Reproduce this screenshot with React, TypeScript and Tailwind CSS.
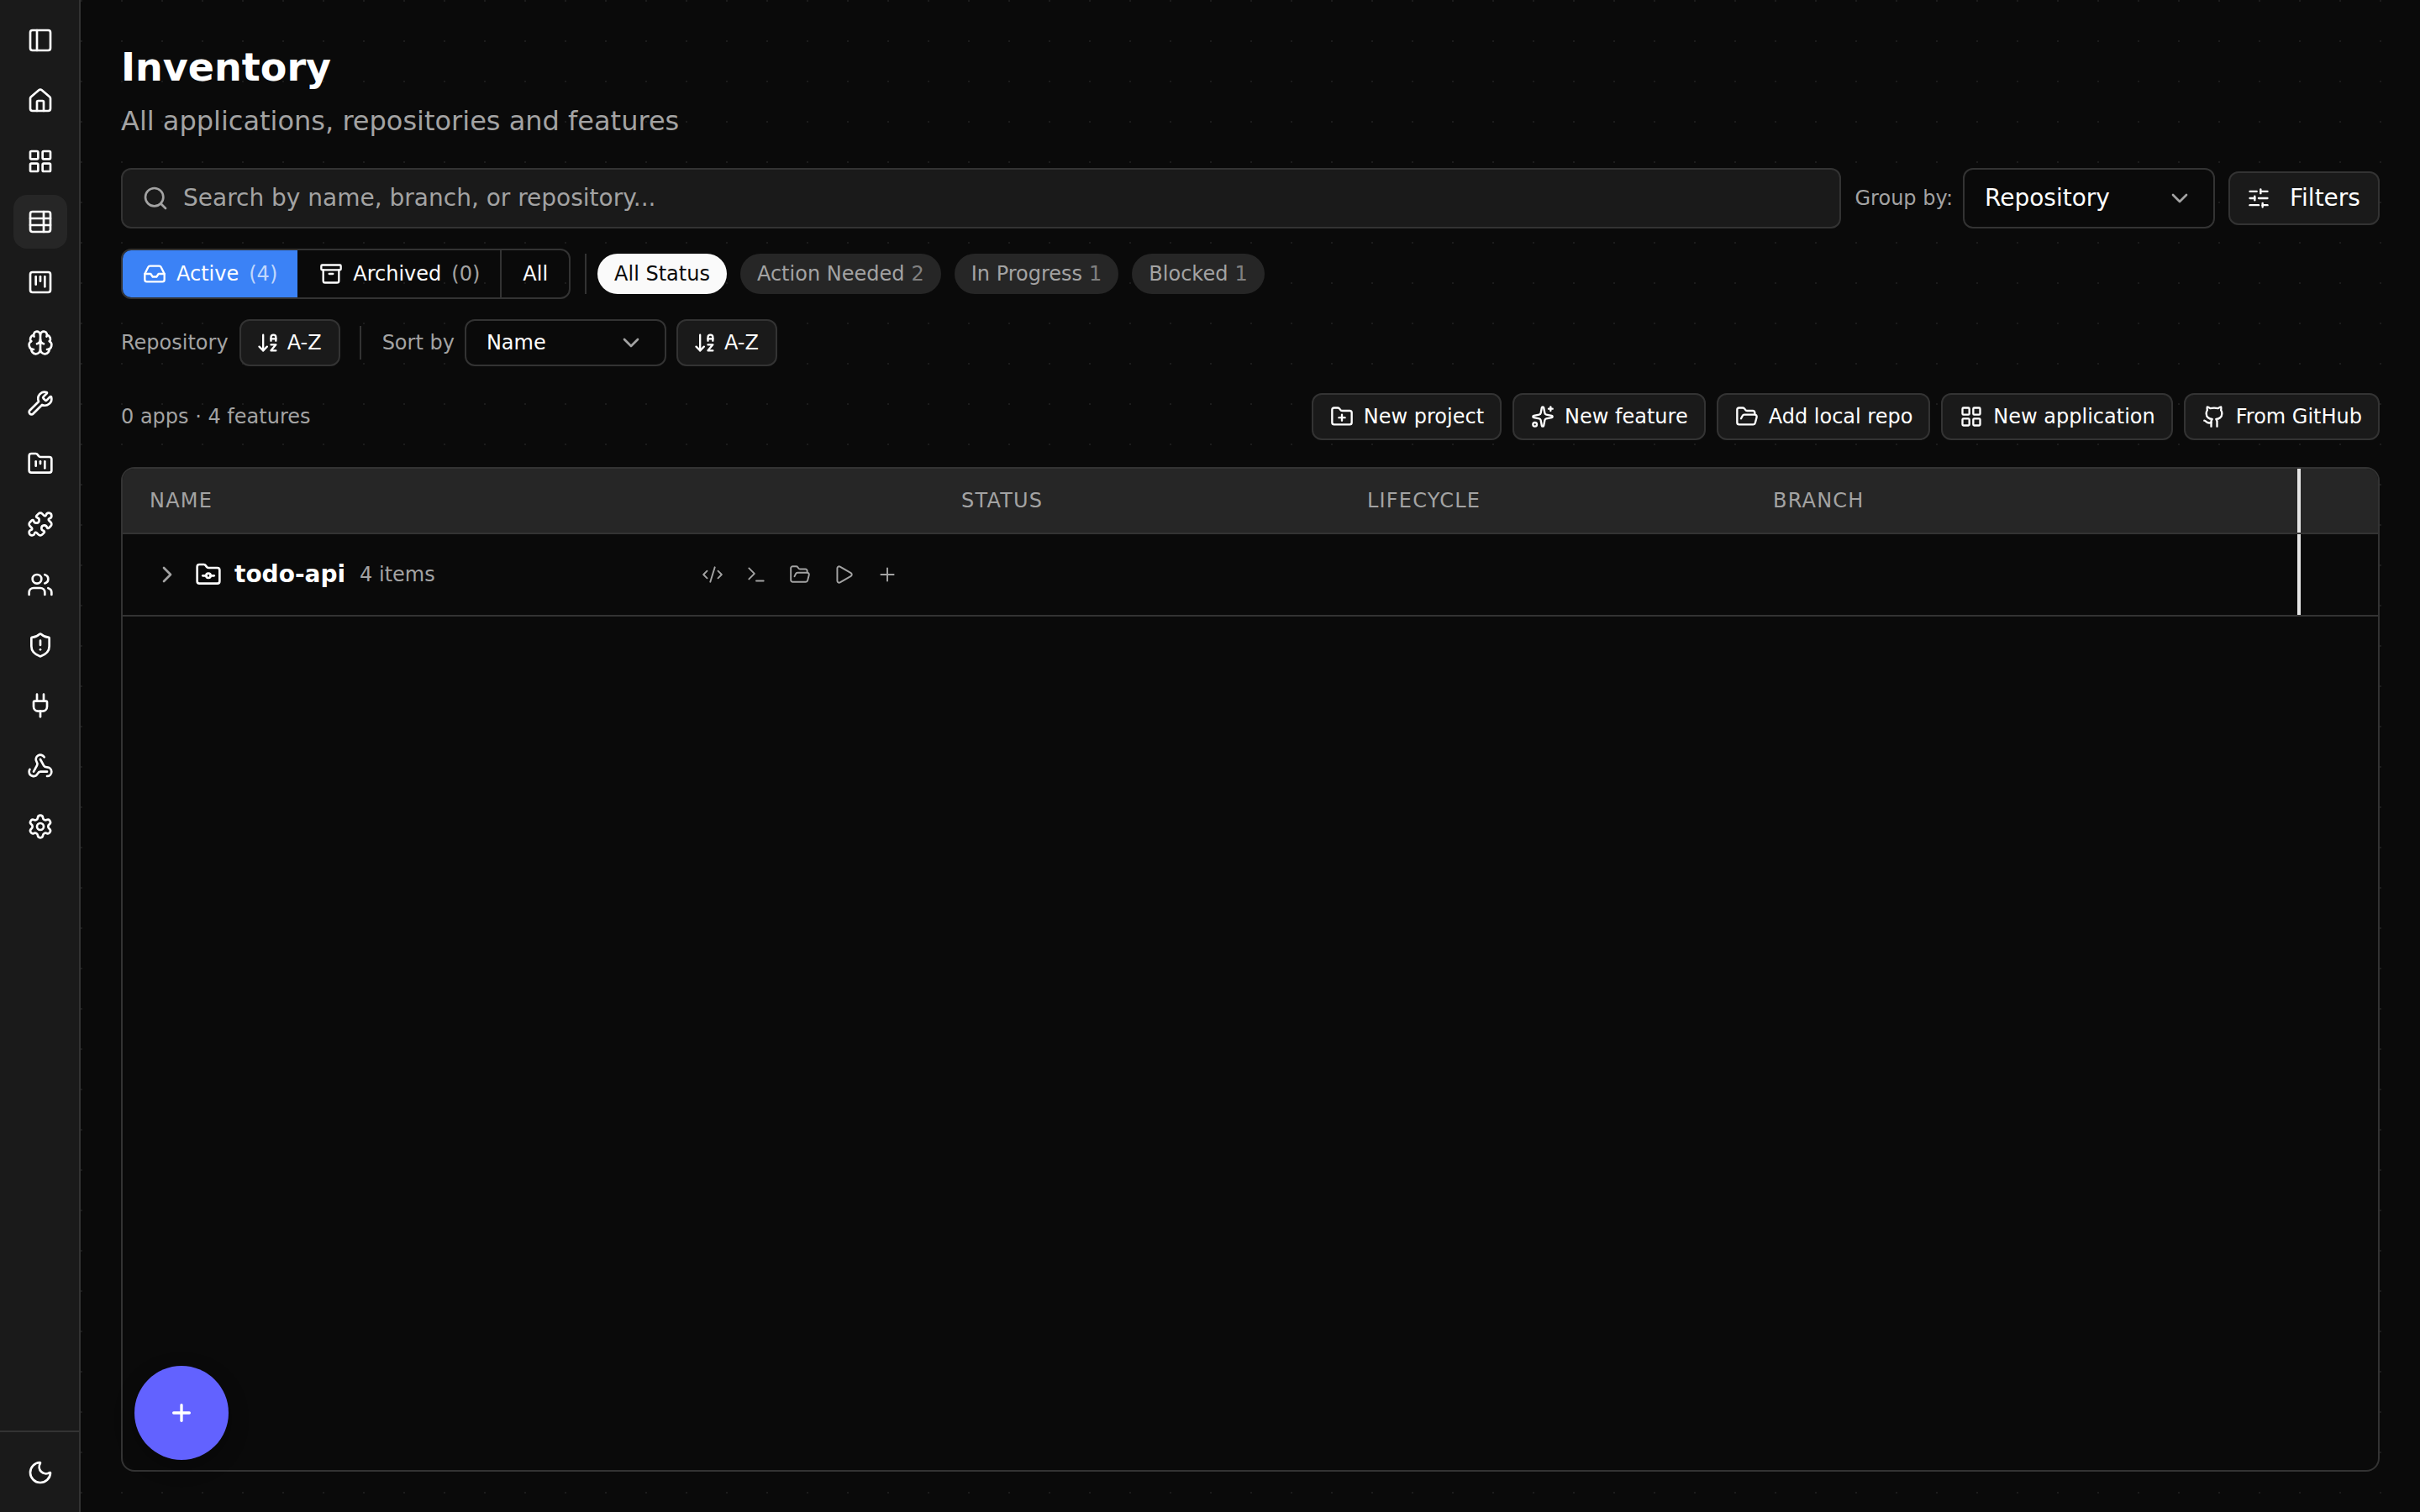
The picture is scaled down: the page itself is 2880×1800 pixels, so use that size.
import {
  Archive,
  ArrowDownAZ,
  Brain,
  ChevronDown,
  ChevronRight,
  CodeXml,
  FolderGit,
  FolderKanban,
  FolderOpen,
  FolderPlus,
  Github,
  House,
  Inbox,
  LayoutGrid,
  Moon,
  PanelLeft,
  Play,
  Plug,
  Plus,
  Puzzle,
  Search,
  Settings,
  ShieldAlert,
  SlidersHorizontal,
  Sparkles,
  SquareKanban,
  TableProperties,
  Terminal,
  Users,
  Webhook,
  Wrench,
} from "lucide-react";
import type { LucideIcon } from "lucide-react";

const navIcons: { icon: LucideIcon; active?: boolean }[] = [
  { icon: PanelLeft },
  { icon: House },
  { icon: LayoutGrid },
  { icon: TableProperties, active: true },
  { icon: SquareKanban },
  { icon: Brain },
  { icon: Wrench },
  { icon: FolderKanban },
  { icon: Puzzle },
  { icon: Users },
  { icon: ShieldAlert },
  { icon: Plug },
  { icon: Webhook },
  { icon: Settings },
];

const statusPills = [
  { label: "Action Needed", count: 2 },
  { label: "In Progress", count: 1 },
  { label: "Blocked", count: 1 },
];

const actionButtons: { icon: LucideIcon; label: string }[] = [
  { icon: FolderPlus, label: "New project" },
  { icon: Sparkles, label: "New feature" },
  { icon: FolderOpen, label: "Add local repo" },
  { icon: LayoutGrid, label: "New application" },
  { icon: Github, label: "From GitHub" },
];

const rowActions: LucideIcon[] = [CodeXml, Terminal, FolderOpen, Play, Plus];

const SortButton = () => (
  <button
    type="button"
    className="h-[56px] flex items-center gap-[9px] pl-[18px] pr-[20px] rounded-[12px] border-2 border-[#333333] bg-[#1a1a1a] text-[24px] text-white"
  >
    <ArrowDownAZ size={28} strokeWidth={2} />
    <span>A-Z</span>
  </button>
);

export default function App() {
  return (
    <div className="w-[2880px] h-[1800px] flex overflow-hidden bg-[#0a0a0a] text-white font-['DejaVu_Sans',sans-serif]">
      <aside className="w-[96px] shrink-0 flex flex-col justify-between bg-[#1a1a1a] border-r-2 border-[#333333]">
        <nav className="flex flex-col items-center gap-[8px] pt-[16px] pl-[2px]">
          {navIcons.map(({ icon: Icon, active }, i) => (
            <div
              key={i}
              className={`size-[64px] flex items-center justify-center rounded-[16px] ${active ? "bg-[#262626]" : ""}`}
            >
              <Icon size={32} strokeWidth={2} />
            </div>
          ))}
        </nav>
        <div className="h-[97px] flex items-center justify-center pl-[2px] border-t-2 border-[#333333]">
          <Moon size={32} strokeWidth={2} />
        </div>
      </aside>

      <main className="relative flex-1 min-w-0 flex flex-col px-[48px] pt-[50px] pb-[48px] bg-[radial-gradient(circle_at_1px_1px,#1c1c1c_1.5px,transparent_1.5px)] bg-[length:48px_48px]">
        <h1 className="text-[46px] leading-[60px] font-bold">Inventory</h1>
        <p className="mt-[8px] text-[32px] leading-[52px] text-[#a3a3a3]">All applications, repositories and features</p>

        <div className="mt-[30px] h-[72px] flex items-center">
          <div className="flex-1 h-[72px] flex items-center gap-[17px] pl-[23px] rounded-[12px] border-2 border-[#333333] bg-[#1a1a1a]">
            <Search size={32} strokeWidth={2} className="text-[#a3a3a3]" />
            <span className="text-[28px] text-[#a3a3a3]">Search by name, branch, or repository...</span>
          </div>
          <span className="ml-[17px] text-[24px] text-[#a3a3a3]">Group by:</span>
          <div className="ml-[12px] w-[300px] h-[72px] flex items-center justify-between px-[24px] rounded-[12px] border-2 border-[#333333] bg-[#0a0a0a]">
            <span className="text-[28px]">Repository</span>
            <ChevronDown size={32} strokeWidth={2} className="text-[#a3a3a3]" />
          </div>
          <button
            type="button"
            className="ml-[16px] w-[180px] h-[64px] flex items-center gap-[23px] pl-[20px] rounded-[12px] border-2 border-[#333333] bg-[#1a1a1a] text-[28px]"
          >
            <SlidersHorizontal size={28} strokeWidth={2} />
            <span>Filters</span>
          </button>
        </div>

        <div className="mt-[24px] h-[60px] flex items-center">
          <div className="h-[60px] flex rounded-[12px] border-2 border-[#333333] overflow-hidden text-[24px]">
            <button type="button" className="flex items-center gap-[12px] px-[24px] bg-[#3b82f6]">
              <Inbox size={28} strokeWidth={2} />
              <span>Active</span>
              <span className="text-white/70">(4)</span>
            </button>
            <button type="button" className="flex items-center gap-[12px] pl-[26px] pr-[24px] border-r-2 border-[#333333]">
              <Archive size={28} strokeWidth={2} />
              <span>Archived</span>
              <span className="text-[#a3a3a3]">(0)</span>
            </button>
            <button type="button" className="flex items-center px-[25px]">All</button>
          </div>
          <div className="ml-[17px] w-[2px] h-[48px] bg-[#333333]" />
          <div className="ml-[13px] flex items-center gap-[16px]">
            <span className="h-[48px] flex items-center px-[20px] rounded-full bg-[#fafafa] text-[24px] text-[#0a0a0a]">All Status</span>
            {statusPills.map((pill) => (
              <span
                key={pill.label}
                className="h-[48px] flex items-center gap-[8px] px-[20px] rounded-full bg-[#262626] text-[24px] text-[#a3a3a3]"
              >
                {pill.label}
                <span className="text-[#808080]">{pill.count}</span>
              </span>
            ))}
          </div>
        </div>

        <div className="mt-[24px] h-[56px] flex items-center">
          <span className="text-[24px] text-[#a3a3a3]">Repository</span>
          <div className="ml-[13px]">
            <SortButton />
          </div>
          <div className="ml-[23px] w-[2px] h-[40px] bg-[#333333]" />
          <span className="ml-[25px] text-[24px] text-[#a3a3a3]">Sort by</span>
          <div className="ml-[12px] w-[240px] h-[56px] flex items-center justify-between px-[24px] rounded-[12px] border-2 border-[#333333] bg-[#0a0a0a]">
            <span className="text-[24px]">Name</span>
            <ChevronDown size={32} strokeWidth={2} className="text-[#a3a3a3]" />
          </div>
          <div className="ml-[12px]">
            <SortButton />
          </div>
        </div>

        <div className="mt-[32px] h-[56px] flex items-center justify-between">
          <span className="text-[24px] text-[#a3a3a3]">0 apps · 4 features</span>
          <div className="flex items-center gap-[13px]">
            {actionButtons.map(({ icon: Icon, label }) => (
              <button
                key={label}
                type="button"
                className="h-[56px] flex items-center gap-[12px] pl-[20px] pr-[19px] rounded-[12px] border-2 border-[#333333] bg-[#1a1a1a] text-[24px]"
              >
                <Icon size={28} strokeWidth={2} />
                <span>{label}</span>
              </button>
            ))}
          </div>
        </div>

        <div className="mt-[32px] flex-1 min-h-0 rounded-[16px] border-2 border-[#333333] bg-[#0a0a0a] overflow-hidden">
          <div className="h-[78px] grid grid-cols-[966px_483px_483px_656px_4px_1fr] border-b-2 border-[#333333] bg-[#262626] text-[24px] tracking-[1.2px] text-[#a3a3a3]">
            <div className="flex items-center pl-[32px]">NAME</div>
            <div className="flex items-center pl-[32px]">STATUS</div>
            <div className="flex items-center pl-[32px]">LIFECYCLE</div>
            <div className="flex items-center pl-[32px]">BRANCH</div>
            <div className="bg-[#e5e5e5]" />
            <div />
          </div>
          <div className="h-[98px] grid grid-cols-[966px_483px_483px_656px_4px_1fr] border-b-2 border-[#333333]">
            <div className="flex items-center pl-[37px] pr-[30px]">
              <ChevronRight size={32} strokeWidth={2} className="text-[#a3a3a3]" />
              <FolderGit size={32} strokeWidth={2} className="ml-[17px]" />
              <span className="ml-[15px] text-[28px] font-bold">todo-api</span>
              <span className="ml-[17px] text-[24px] text-[#a3a3a3]">4 items</span>
              <div className="ml-auto flex items-center text-[#a3a3a3]">
                {rowActions.map((Icon, i) => (
                  <div key={i} className="w-[52px] flex justify-center">
                    <Icon size={26} strokeWidth={1.8} />
                  </div>
                ))}
              </div>
            </div>
            <div />
            <div />
            <div />
            <div className="bg-[#e5e5e5]" />
            <div />
          </div>
        </div>

        <button
          type="button"
          className="absolute left-[64px] bottom-[62px] size-[112px] flex items-center justify-center rounded-full bg-[#6262ff] shadow-[0_8px_24px_rgba(0,0,0,0.3)]"
        >
          <Plus size={32} strokeWidth={2.5} />
        </button>
      </main>
    </div>
  );
}
